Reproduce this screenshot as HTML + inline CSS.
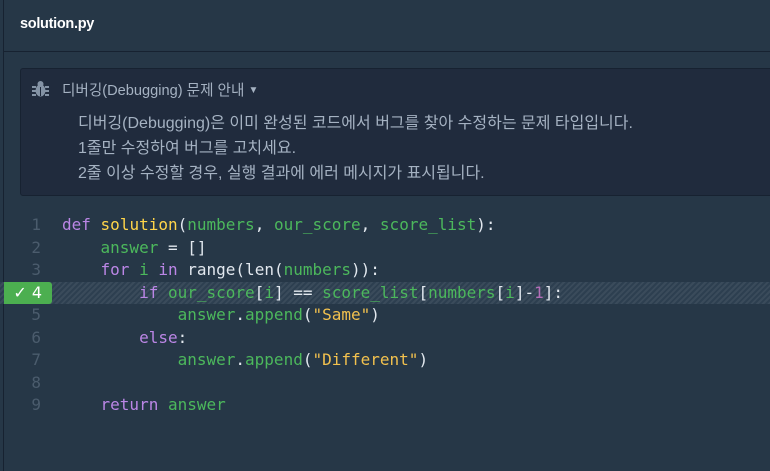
<!DOCTYPE html>
<html><head><meta charset="utf-8"><style>
body{margin:0;width:770px;height:471px;background:#263747;overflow:hidden;position:relative;font-family:"Liberation Sans","Noto Sans CJK KR",sans-serif}
.lb{position:absolute;left:3px;top:0;width:1px;height:471px;background:#172231}
.hdr{position:absolute;left:4px;top:0;right:0;height:51px;border-bottom:1px solid #172231}
.hdr b{position:absolute;left:16px;top:16px;color:#fff;font-size:14.5px;letter-spacing:-0.3px}
.box{position:absolute;left:20px;top:68px;width:770px;height:126px;background:#202b3d;border:1px solid #172231;border-radius:3px;color:#a5b2c2}
.t{position:absolute;left:41px;top:10px;font-size:14.6px}
.p{position:absolute;left:57px;font-size:16px;line-height:20px}
.code{position:absolute;left:0;top:214px;width:770px;font-family:"DejaVu Sans Mono",monospace;font-size:16px;color:#e2e8ef}
.ln{height:22.5px;line-height:22.5px;position:relative;white-space:pre}
.n{position:absolute;left:0;width:41px;text-align:right;color:#4b5c6d}
.c{position:absolute;left:62px}
.hl{background:repeating-linear-gradient(135deg,#2d3f50 0 2px,#3a4b5b 2px 4px)}
.g{position:absolute;left:4px;top:0;width:48px;height:22px;background:#4caf50;border-radius:0 3px 3px 0;color:#fff;text-align:right;box-sizing:border-box;padding-right:10px;font-family:"DejaVu Sans",sans-serif;font-size:16px}
.k{color:#bb86e6}.f{color:#ffd54a}.v{color:#4cb85c}.s{color:#f2c14e}.m{color:#b36eb8}.o{color:#e2e8ef}
</style></head><body>
<div class="lb"></div>
<div class="hdr"><b>solution.py</b></div>
<div class="box">
<svg style="position:absolute;left:11px;top:11px" width="17" height="18" viewBox="0 0 17 18"><g fill="#8493a5"><ellipse cx="8.5" cy="10.5" rx="5" ry="6"/><circle cx="8.5" cy="4" r="3"/><rect x="0" y="6" width="4" height="2"/><rect x="13" y="6" width="4" height="2"/><rect x="0" y="10" width="4" height="2"/><rect x="13" y="10" width="4" height="2"/><rect x="0" y="14" width="4" height="2"/><rect x="13" y="14" width="4" height="2"/></g><rect x="8" y="7" width="1" height="9" fill="#202b3d"/></svg>
<div class="t">디버깅(Debugging) 문제 안내 <span style="font-size:10px;vertical-align:2px">▼</span></div>
<div class="p" style="top:45px">디버깅(Debugging)은 이미 완성된 코드에서 버그를 찾아 수정하는 문제 타입입니다.</div>
<div class="p" style="top:70px">1줄만 수정하여 버그를 고치세요.</div>
<div class="p" style="top:95px">2줄 이상 수정할 경우, 실행 결과에 에러 메시지가 표시됩니다.</div>
</div>
<div class="code">
<div class="ln"><span class="n">1</span><span class="c"><span class="k">def</span> <span class="f">solution</span>(<span class="v">numbers</span>, <span class="v">our_score</span>, <span class="v">score_list</span>):</span></div>
<div class="ln"><span class="n">2</span><span class="c">    <span class="v">answer</span> = []</span></div>
<div class="ln"><span class="n">3</span><span class="c">    <span class="k">for</span> <span class="v">i</span> <span class="k">in</span> range(len(<span class="v">numbers</span>)):</span></div>
<div class="ln hl"><span class="g">✓ 4</span><span class="c">        <span class="k">if</span> <span class="v">our_score</span>[<span class="v">i</span>] == <span class="v">score_list</span>[<span class="v">numbers</span>[<span class="v">i</span>]-<span class="m">1</span>]:</span></div>
<div class="ln"><span class="n">5</span><span class="c">            <span class="v">answer</span>.<span class="v">append</span>(<span class="s">"Same"</span>)</span></div>
<div class="ln"><span class="n">6</span><span class="c">        <span class="k">else</span>:</span></div>
<div class="ln"><span class="n">7</span><span class="c">            <span class="v">answer</span>.<span class="v">append</span>(<span class="s">"Different"</span>)</span></div>
<div class="ln"><span class="n">8</span></div>
<div class="ln"><span class="n">9</span><span class="c">    <span class="k">return</span> <span class="v">answer</span></span></div>
</div>
</body></html>
